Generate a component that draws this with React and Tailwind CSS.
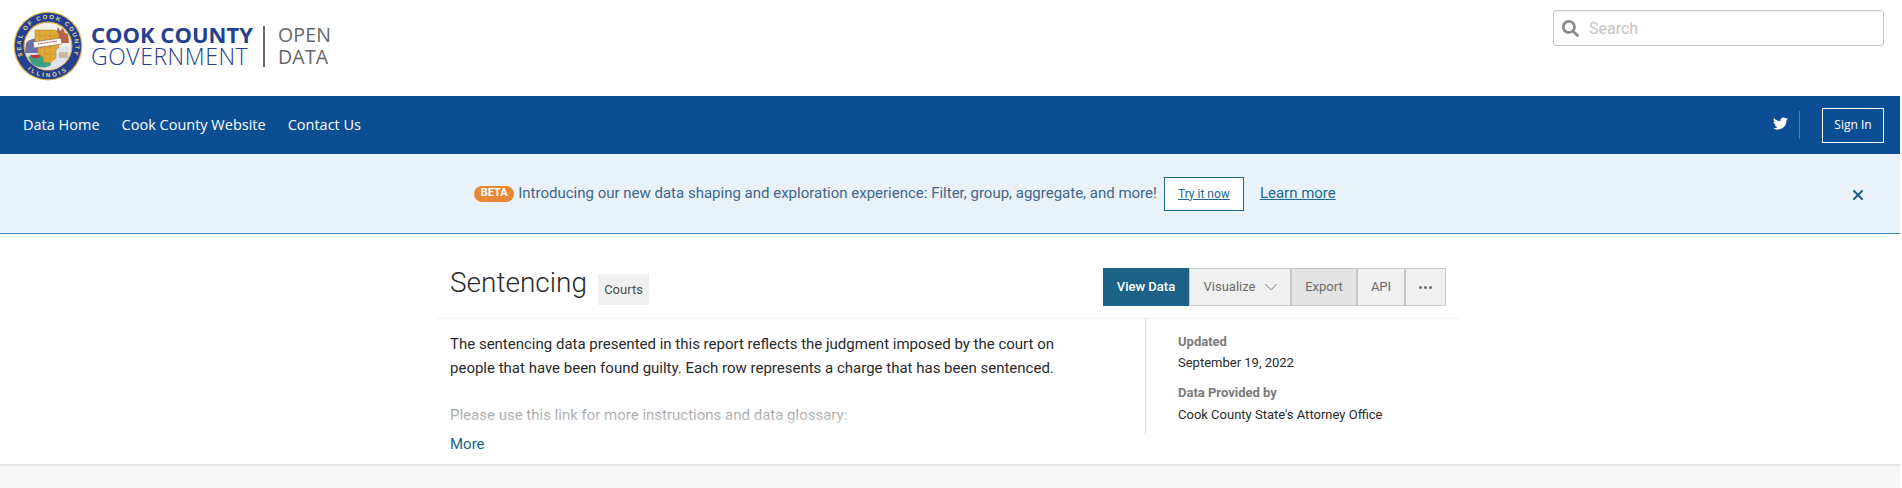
import { FaTwitter, FaSearch } from 'react-icons/fa';
import { ChevronDown, X } from 'lucide-react';

// County seal, drawn by hand
function Seal() {
  return (
    <svg width="70" height="70" viewBox="0 0 70 70" className="shrink-0">
      <circle cx="35" cy="35" r="34.5" fill="#d9b65c" />
      <circle cx="35" cy="35" r="33.2" fill="#24408e" />
      <circle cx="35" cy="35" r="24.5" fill="#d9a93f" />
      <circle cx="35" cy="35" r="23.3" fill="#f4f1ec" />
      <path d="M12 36h46a23 23 0 0 1-46 0z" fill="#dfe3ea" />
      <path d="M13 32c6-6 14-5 21-2v12H12z" fill="#6a6fa8" />
      <path d="M15 46c6-3 13-3 21-1l2 9c-6 4-14 3-19-1z" fill="#3f9e84" />
      <path d="M17 44h11l-2 3h-7z" fill="#b8392f" />
      <path d="M42 24l3-8 2 4 3-3 2 5 3 1 1 9H42z" fill="#b5654a" />
      <path d="M22 19h20l4 4v13l-3 3v8l-6 5-7-1v-5l-5-3V33h-3z" fill="#e2a93a" stroke="#a87c22" strokeWidth="0.5" />
      <path d="M27 19v28M32 19v30M37 19v31M22 25h24M22 31h24M25 37h20M30 43h13" stroke="#b98a2a" strokeWidth="0.4" />
      <path d="M46 41h9v6h-9z" fill="#c9b9a5" />
      <path d="M20 31l28-4 1 6-28 4z" fill="#fbfaf6" stroke="#555" strokeWidth="0.5" />
      <path d="M25 33l19-3" stroke="#a33" strokeWidth="0.9" strokeDasharray="1 0.5" />
      <path id="sealTop" d="M11.6 48.5A27 27 0 1 1 58.4 48.5" fill="none" />
      <path id="sealBottom" d="M7 49A31.5 31.5 0 0 0 63 49" fill="none" />
      <text fontSize="6" fontWeight="700" fill="#e8d9a0" fontFamily="'Liberation Sans', sans-serif" letterSpacing="1.7" textAnchor="middle">
        <textPath href="#sealTop" startOffset="50%">SEAL OF COOK COUNTY</textPath>
      </text>
      <text fontSize="6" fontWeight="700" fill="#e8d9a0" fontFamily="'Liberation Sans', sans-serif" letterSpacing="2.4" textAnchor="middle">
        <textPath href="#sealBottom" startOffset="50%">ILLINOIS</textPath>
      </text>
    </svg>
  );
}

function ActionButton({ children, className = 'bg-[#f0f0f0]' }) {
  return (
    <button className={`flex h-[38px] items-center justify-center border border-[#c8c8c8] text-[13px] text-[#6b6b6b] ${className}`}>
      {children}
    </button>
  );
}

export default function App() {
  return (
    <div className="h-[488px] overflow-hidden bg-white font-['Roboto',sans-serif]">
      <div className="w-[1900px]">
        {/* Header */}
        <header className="flex h-[96px] items-start justify-between bg-white">
          <div className="ml-[13px] mt-[11px] flex items-start">
            <Seal />
            <div className="ml-[8px] mt-[13px] w-[162px] whitespace-nowrap font-['Open_Sans',sans-serif] text-[#24408e]">
              <div className="text-[22px] font-bold leading-[20px]">COOK COUNTY</div>
              <div className="mt-[1px] text-[23px] font-light leading-[22px] tracking-[0.55px]">GOVERNMENT</div>
            </div>
            <div className="ml-[10px] mt-[15px] h-[41px] w-[2px] bg-[#6b6b6b]" />
            <div className="ml-[13px] mt-[13px] font-['Open_Sans',sans-serif] text-[19.5px] font-medium leading-[22px] tracking-[0.2px] text-[#666666]">
              <div>OPEN</div>
              <div>DATA</div>
            </div>
          </div>
          <div className="mr-[16px] mt-[10px] flex h-[36px] w-[331px] items-center rounded-[3px] border border-[#c8c8c8] bg-white pl-[8px] shadow-[inset_0_1px_2px_rgba(0,0,0,0.08)]">
            <FaSearch className="text-[#8a8a8a]" size={17} />
            <span className="ml-[10px] mt-[1px] text-[16px] text-[#c4c4c4]">Search</span>
          </div>
        </header>

        {/* Nav */}
        <nav className="flex h-[58px] items-center justify-between bg-[#0b4e94] font-['Open_Sans',sans-serif] text-white">
          <div className="ml-[23px] flex items-center gap-[22px] text-[14.5px]">
            <a>Data Home</a>
            <a>Cook County Website</a>
            <a>Contact Us</a>
          </div>
          <div className="mr-[16px] flex items-center">
            <FaTwitter size={15} className="mb-[3px]" />
            <div className="ml-[11px] h-[28px] w-px bg-[#4f7fb5]" />
            <a className="ml-[22px] flex h-[35px] w-[62px] items-center justify-center border border-white text-[12px]">Sign In</a>
          </div>
        </nav>

        {/* Beta banner */}
        <div className="relative flex h-[80px] items-center justify-center border-b border-[#3d87bd] bg-[#eaf2f9] pr-[90px]">
          <span className="flex h-[16px] w-[40px] items-center justify-center rounded-full bg-[#e88834] text-[11px] font-bold text-white">BETA</span>
          <span className="ml-[4px] text-[15px] text-[#3f668c]">Introducing our new data shaping and exploration experience: Filter, group, aggregate, and more!</span>
          <a className="ml-[7px] flex h-[34px] w-[80px] items-center justify-center border border-[#1d6a94] bg-white text-[12px] text-[#1d6a94] underline">Try it now</a>
          <a className="ml-[16px] text-[15px] text-[#1d6a94] underline">Learn more</a>
          <X className="absolute right-[34px] top-[33px] text-[#1d6188]" size={16} strokeWidth={3} />
        </div>

        {/* Dataset info */}
        <main className="h-[232px] border-b-2 border-[#e5e5e5]">
          <div className="ml-[438px] w-[1020px]">
            <div className="flex h-[85px] border-b border-[#efefef] pl-[12px] pr-[12px] pt-[34px]">
              <h1 className="-mt-[2px] text-[28px] font-light leading-[34px] text-[#2a2a2a]">Sentencing</h1>
              <span className="ml-[11px] mt-[6px] flex h-[31px] w-[51px] items-center justify-center bg-[#f0f0f0] text-[13px] text-[#4d4d4d]">Courts</span>
              <div className="ml-auto flex">
                <button className="flex h-[38px] w-[86px] items-center justify-center bg-[#1c6387] text-[13px] font-medium text-white">View Data</button>
                <ActionButton className="w-[102px] bg-[#f0f0f0] pl-[6px]">
                  Visualize
                  <ChevronDown size={22} strokeWidth={1} className="ml-[5px] text-[#6b6b6b]" />
                </ActionButton>
                <ActionButton className="w-[66px] bg-[#e3e3e3]">Export</ActionButton>
                <ActionButton className="w-[48px] bg-[#f0f0f0]">API</ActionButton>
                <ActionButton className="w-[41px] bg-[#f0f0f0]">
                  <span className="flex gap-[2px]">
                    <i className="size-[3px] rounded-full bg-[#6b6b6b]" />
                    <i className="size-[3px] rounded-full bg-[#6b6b6b]" />
                    <i className="size-[3px] rounded-full bg-[#6b6b6b]" />
                  </span>
                </ActionButton>
              </div>
            </div>
            <div className="flex">
              <div className="relative h-[116px] w-[707px] pl-[12px] pr-[20px] pt-[13px] text-[15px] leading-[24px] text-[#2a2a2a]">
                <p>The sentencing data presented in this report reflects the judgment imposed by the court on<br />people that have been found guilty. Each row represents a charge that has been sentenced.</p>
                <p className="mt-[23px]">Please use this link for more instructions and data glossary:</p>
                <div className="absolute inset-x-0 bottom-0 h-[64px] bg-gradient-to-b from-white/0 to-white/90" />
              </div>
              <div className="h-[116px] border-l border-[#dddddd] pl-[32px] pt-[12px] text-[13px]">
                <div className="font-bold leading-[21px] text-[#7a7a7a]">Updated</div>
                <div className="leading-[21px] text-[#2a2a2a]">September 19, 2022</div>
                <div className="mt-[9px] font-bold leading-[21px] text-[#7a7a7a]">Data Provided by</div>
                <div className="mt-[1px] leading-[21px] text-[#2a2a2a]">Cook County State's Attorney Office</div>
              </div>
            </div>
            <a className="-mt-[2px] ml-[12px] block text-[15px] leading-[22px] text-[#1d6188]">More</a>
          </div>
        </main>
        <div className="h-[22px] bg-[#f7f7f7]" />
      </div>
    </div>
  );
}
